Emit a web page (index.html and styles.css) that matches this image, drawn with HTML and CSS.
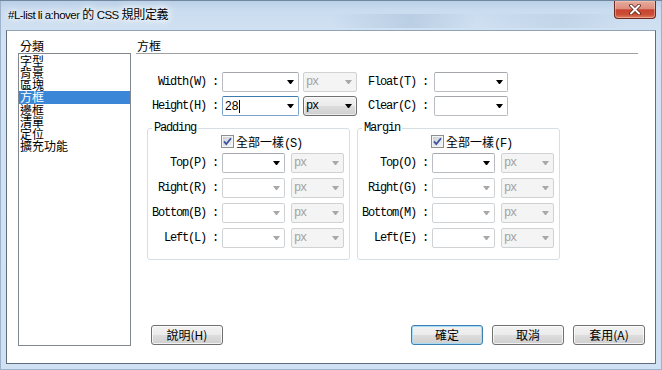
FILE: index.html
```html
<!DOCTYPE html>
<html lang="zh-Hant">
<head>
<meta charset="utf-8">
<title>CSS 規則定義</title>
<link rel="stylesheet" href="styles.css">
</head>
<body>
<div class="window">
  <div class="titlebar">
    <span class="title">#L-list li a:hover <span class="tcjk">的</span> CSS <span class="tcjk">規則定義</span></span>
    <button class="close" aria-label="close">
      <svg width="14" height="11" viewBox="0 0 14 11"><path d="M3 1.5 L11 9.5 M11 1.5 L3 9.5" stroke="#5a1e16" stroke-width="3.6" stroke-linecap="round"/><path d="M3 1.5 L11 9.5 M11 1.5 L3 9.5" stroke="#ffffff" stroke-width="2" stroke-linecap="round"/></svg>
    </button>
  </div>
  <div class="client">
    <div class="cat">
      <div class="cat-label">分類</div>
      <ul class="listbox">
        <li>字型</li>
        <li>背景</li>
        <li>區塊</li>
        <li class="sel">方框</li>
        <li>邊框</li>
        <li>清單</li>
        <li>定位</li>
        <li>擴充功能</li>
      </ul>
    </div>
    <div class="main">
      <div class="heading">方框</div>
      <div class="form">
        <div class="row">
          <span class="lbl lbl-a">Width(W) :</span>
          <div class="combo combo-w"><i class="arrow"></i></div>
          <div class="combo unit disabled"><span class="mono">px</span><i class="arrow"></i></div>
          <span class="lbl lbl-f">Float(T) :</span>
          <div class="combo combo-f"><i class="arrow"></i></div>
        </div>
        <div class="row">
          <span class="lbl lbl-a">Height(H) :</span>
          <div class="combo combo-w focus"><span class="val">28</span><span class="caret"></span><i class="arrow"></i></div>
          <div class="combo unit active"><span class="mono">px</span><i class="arrow"></i></div>
          <span class="lbl lbl-f">Clear(C) :</span>
          <div class="combo combo-f"><i class="arrow"></i></div>
        </div>
      </div>
      <div class="groups">
        <fieldset class="group">
          <legend class="mono">Padding</legend>
          <div class="same">
            <svg class="check" width="13" height="13" viewBox="0 0 13 13"><defs><linearGradient id="cb1" x1="0" y1="0" x2="1" y2="1"><stop offset="0" stop-color="#cbcfd5"/><stop offset="1" stop-color="#f6f6f6"/></linearGradient></defs><rect x="0.5" y="0.5" width="12" height="12" fill="#f4f4f4" stroke="#8e8f8f"/><rect x="2" y="2" width="9" height="9" fill="url(#cb1)"/><path d="M3 6.3 L5.3 9 L10 3.2" fill="none" stroke="#3d55a0" stroke-width="1.8"/></svg>
            <span class="mono"><span class="cjk">全部一樣</span>(S)</span>
          </div>
          <div class="grows">
            <div class="grow"><span class="lbl lbl-g">Top(P) :</span><div class="combo combo-g"><i class="arrow"></i></div><div class="combo gunit disabled"><span class="mono">px</span><i class="arrow"></i></div></div>
            <div class="grow"><span class="lbl lbl-g">Right(R) :</span><div class="combo combo-g dim"><i class="arrow"></i></div><div class="combo gunit disabled"><span class="mono">px</span><i class="arrow"></i></div></div>
            <div class="grow"><span class="lbl lbl-g">Bottom(B) :</span><div class="combo combo-g dim"><i class="arrow"></i></div><div class="combo gunit disabled"><span class="mono">px</span><i class="arrow"></i></div></div>
            <div class="grow"><span class="lbl lbl-g">Left(L) :</span><div class="combo combo-g dim"><i class="arrow"></i></div><div class="combo gunit disabled"><span class="mono">px</span><i class="arrow"></i></div></div>
          </div>
        </fieldset>
        <fieldset class="group">
          <legend class="mono">Margin</legend>
          <div class="same">
            <svg class="check" width="13" height="13" viewBox="0 0 13 13"><defs><linearGradient id="cb2" x1="0" y1="0" x2="1" y2="1"><stop offset="0" stop-color="#cbcfd5"/><stop offset="1" stop-color="#f6f6f6"/></linearGradient></defs><rect x="0.5" y="0.5" width="12" height="12" fill="#f4f4f4" stroke="#8e8f8f"/><rect x="2" y="2" width="9" height="9" fill="url(#cb2)"/><path d="M3 6.3 L5.3 9 L10 3.2" fill="none" stroke="#3d55a0" stroke-width="1.8"/></svg>
            <span class="mono"><span class="cjk">全部一樣</span>(F)</span>
          </div>
          <div class="grows">
            <div class="grow"><span class="lbl lbl-g">Top(O) :</span><div class="combo combo-g"><i class="arrow"></i></div><div class="combo gunit disabled"><span class="mono">px</span><i class="arrow"></i></div></div>
            <div class="grow"><span class="lbl lbl-g">Right(G) :</span><div class="combo combo-g dim"><i class="arrow"></i></div><div class="combo gunit disabled"><span class="mono">px</span><i class="arrow"></i></div></div>
            <div class="grow"><span class="lbl lbl-g">Bottom(M) :</span><div class="combo combo-g dim"><i class="arrow"></i></div><div class="combo gunit disabled"><span class="mono">px</span><i class="arrow"></i></div></div>
            <div class="grow"><span class="lbl lbl-g">Left(E) :</span><div class="combo combo-g dim"><i class="arrow"></i></div><div class="combo gunit disabled"><span class="mono">px</span><i class="arrow"></i></div></div>
          </div>
        </fieldset>
      </div>
      <div class="buttons">
        <button class="btn">說明(H)</button>
        <button class="btn default push">確定</button>
        <button class="btn">取消</button>
        <button class="btn">套用(A)</button>
      </div>
    </div>
  </div>
</div>
</body>
</html>
```

FILE: styles.css
```css
html, body {
  margin: 0;
  padding: 0;
  background: #ffffff;
}

body {
  font-family: "Noto Sans CJK TC", "Liberation Sans", sans-serif;
  font-size: 12px;
  color: #000;
}

.window {
  width: 662px;
  height: 370px;
  box-sizing: border-box;
  padding: 0 6px 6px;
  display: flex;
  flex-direction: column;
  background:
    linear-gradient(90deg, rgba(255,255,255,0) 0, rgba(255,255,255,0) 50%, rgba(150,175,205,0.35) 62%, rgba(255,255,255,0) 72%, rgba(160,185,210,0.25) 85%, rgba(255,255,255,0) 95%) 0 14px / 100% 14px no-repeat,
    linear-gradient(180deg, #b8cfe7 0, #cadcef 10px, #d3e3f3 40px, #d0e1f3 100%);
  box-shadow: inset 0 1px 0 #72879e, inset 1px 0 0 #9db3cb, inset -1px 0 0 #9db3cb, inset 0 -1px 0 #9db3cb;
}

.titlebar {
  height: 30px;
  flex: none;
  display: flex;
  justify-content: space-between;
  align-items: flex-start;
  padding-left: 2px;
}

.title {
  font-family: "Liberation Sans", "Noto Sans CJK TC", sans-serif;
  font-size: 11.5px;
  letter-spacing: -0.5px;
  line-height: 14px;
  margin-top: 7px;
  color: #000;
  text-shadow: 0 0 5px #fff, 0 0 9px #fff, 0 0 12px rgba(255,255,255,0.9);
}

.tcjk {
  font-family: "Noto Sans CJK TC", sans-serif;
  font-size: 12px;
  letter-spacing: -0.3px;
}

.close {
  width: 42px;
  height: 18px;
  margin: 1px 0 0 0;
  padding: 0;
  border: 1px solid #6c2a22;
  border-top: none;
  border-radius: 0 0 4px 4px;
  background: linear-gradient(180deg, #e8ab9d 0%, #dc8e7f 45%, #c8432f 52%, #cc4f36 80%, #de7f62 100%);
  box-shadow: inset 0 0 0 1px rgba(255,210,200,0.45);
  display: flex;
  align-items: center;
  justify-content: center;
}

.client {
  flex: 1;
  display: flex;
  background: #ffffff;
  border: 1px solid #5f6e7f;
  border-top-color: #90a2b6;
  padding: 7px 10px 0 11px;
  min-height: 0;
}

.cat {
  width: 113px;
  flex: none;
  display: flex;
  flex-direction: column;
}

.cat-label {
  height: 15px;
  line-height: 15px;
  padding-left: 2px;
}

.listbox {
  list-style: none;
  margin: 0;
  padding: 1px 0 0 0;
  height: 293px;
  box-sizing: border-box;
  border: 1px solid #828790;
}

.listbox li {
  font-size: 12px;
  line-height: 12px;
  height: 12px;
  padding-left: 1px;
}

.listbox li.sel {
  background: #3b86d6;
  color: #fff;
  height: 13px;
}

.main {
  flex: 1;
  margin-left: 5px;
  display: flex;
  flex-direction: column;
}

.heading {
  height: 15px;
  line-height: 15px;
  padding-left: 1px;
  border-bottom: 1px solid #a0a0a0;
  margin-right: 7px;
}

.form {
  margin-top: 18px;
  display: flex;
  flex-direction: column;
  gap: 4px;
}

.row, .grow {
  display: flex;
  align-items: center;
  height: 20px;
}

.lbl, .mono {
  font-family: "Liberation Mono", "Noto Sans CJK TC", monospace;
  font-size: 12px;
  letter-spacing: -1.2px;
  white-space: pre;
}

.cjk {
  font-family: "Noto Sans CJK TC", sans-serif;
  letter-spacing: 0;
}

.lbl {
  text-align: right;
  color: #000;
}

.lbl-a { width: 82px; margin-right: 4px; }
.lbl-f { width: 71px; margin-right: 6px; }
.lbl-g { width: 70px; margin-right: 4px; }

.combo {
  height: 20px;
  box-sizing: border-box;
  display: flex;
  align-items: center;
  padding: 0 4px 0 2px;
  border: 1px solid #b9bdc2;
  border-top-color: #a4a8ad;
  border-radius: 2px;
  background: #fff;
}

.combo-w { width: 77px; margin-right: 4px; }
.combo-f { width: 74px; }
.combo-g { width: 63px; margin-right: 6px; }

.unit { width: 54px; }
.gunit { width: 53px; }

.arrow {
  display: block;
  margin-left: auto;
  width: 1px;
  height: 0;
  border-top: 4px solid #000;
  border-left: 3px solid transparent;
  border-right: 3px solid transparent;
}

.combo.dim .arrow { border-top-color: #a8a8a8; }
.combo.dim { border-color: #d0d3d6; }

.combo.disabled {
  background: #f4f4f4;
  border-color: #cfd1d3;
  color: #a2a2a2;
}
.combo.disabled .arrow { border-top-color: #a8a8a8; }

.combo.active {
  border-color: #707070;
  border-radius: 3px;
  background: linear-gradient(180deg, #f2f2f2 0%, #ebebeb 50%, #dddddd 51%, #cfcfcf 100%);
  box-shadow: inset 0 0 0 1px rgba(255,255,255,0.6);
}

.combo.focus {
  border-color: #7da2ce;
  border-top-color: #3d7bad;
}

.val {
  font-family: "Liberation Sans", sans-serif;
  font-size: 12px;
  line-height: 14px;
}

.caret {
  width: 1px;
  height: 13px;
  background: #000;
  margin-left: 1px;
}

.groups {
  display: flex;
  gap: 7px;
  margin-top: 6px;
  margin-left: 11px;
}

.group {
  width: 203px;
  box-sizing: border-box;
  margin: 0;
  padding: 0 5px 11px 0;
  min-width: 0;
  border: 1px solid #d5dfe5;
  border-radius: 3px;
}

.group legend {
  padding: 0 2px;
  margin-left: 4px;
  line-height: 12px;
  height: 12px;
}

.same {
  display: flex;
  align-items: center;
  height: 13px;
  margin-top: 1px;
  margin-left: 73px;
  gap: 2px;
}

.check { display: block; flex: none; }

.grows {
  margin-top: 5px;
  display: flex;
  flex-direction: column;
  gap: 5px;
}

.buttons {
  margin-top: auto;
  display: flex;
  gap: 9px;
  padding: 0 0 18px 15px;
}

.btn {
  width: 72px;
  height: 20px;
  box-sizing: border-box;
  padding: 0;
  font-family: "Noto Sans CJK TC", "Liberation Sans", sans-serif;
  font-size: 12px;
  line-height: 16px;
  color: #000;
  border: 1px solid #707070;
  border-radius: 3px;
  background: linear-gradient(180deg, #f2f2f2 0%, #ebebeb 50%, #dddddd 51%, #cfcfcf 100%);
  box-shadow: inset 0 0 0 1px rgba(255,255,255,0.7);
}

.btn.push { margin-left: auto; }

.btn.default {
  border-color: #3c7fb1;
  box-shadow: inset 0 0 0 1px #a6dcf5;
}
```
